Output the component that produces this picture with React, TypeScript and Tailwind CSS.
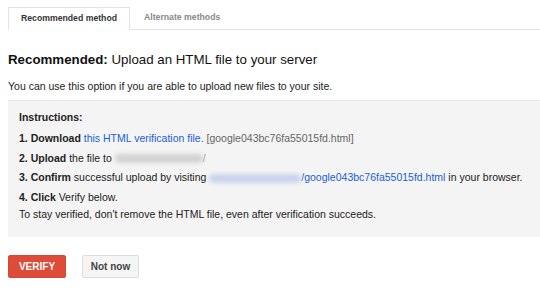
import React from 'react';

const blurBar = 'inline-block align-middle h-[9px] rounded-full blur-[2px]';

export default function App() {
  return (
    <div
      className="w-[540px] h-[293px] overflow-hidden bg-white pl-[8px] text-[#222]"
      style={{ fontFamily: '"Liberation Sans", Arial, sans-serif' }}
    >
      {/* Tabs */}
      <div className="mt-[8px] flex items-end h-[22px] border-b border-[#e3e3e3]">
        <div className="-mb-px h-[23px] w-[122px] flex items-center justify-center border border-b-0 border-[#e3e3e3] bg-white text-[8.7px] font-bold text-[#333]">
          Recommended method
        </div>
        <div className="h-[22px] flex items-center pl-[14px] text-[8.7px] font-bold text-[#888]">
          Alternate methods
        </div>
      </div>

      {/* Heading */}
      <h1 className="mt-[21px] text-[13.3px] leading-[18px] text-[#111]">
        <span className="font-bold">Recommended:</span> Upload an HTML file to your server
      </h1>

      <p className="mt-[10px] text-[10.5px] leading-[14px] text-[#222]">
        You can use this option if you are able to upload new files to your site.
      </p>

      {/* Instructions panel */}
      <div className="mt-[7px] h-[137px] bg-[#f4f4f4] border-t border-[#e6e6e6] pl-[11px] pt-[9px] text-[10.5px] leading-[14px] whitespace-nowrap">
        <div className="font-bold mb-[7px]">Instructions:</div>
        <div className="flex flex-col gap-[5.5px]">
          <div>
            <span className="font-bold">1. Download</span>{' '}
            <span className="text-[#1a5fd6]">this HTML verification file.</span>{' '}
            <span className="text-[#666]">[google043bc76fa55015fd.html]</span>
          </div>
          <div>
            <span className="font-bold">2. Upload</span> the file to{' '}
            <span className={`${blurBar} w-[88px] bg-[#d2d2d2]`} />
            <span className="text-[#999]">/</span>
          </div>
          <div>
            <span className="font-bold">3. Confirm</span> successful upload by visiting{' '}
            <span className={`${blurBar} w-[92px] bg-[#c9d3ee]`} />
            <span className="text-[#1a5fd6]">/google043bc76fa55015fd.html</span> in your browser.
          </div>
          <div>
            <span className="font-bold">4. Click</span> Verify below.
          </div>
          <div className="-mt-[2px]">To stay verified, don't remove the HTML file, even after verification succeeds.</div>
        </div>
      </div>

      {/* Buttons */}
      <div className="mt-[18px] flex gap-[16px]">
        <button className="h-[23px] w-[58px] rounded-[2px] bg-[#dd4b39] border border-[#d14836] text-white text-[10px] font-bold">
          VERIFY
        </button>
        <button className="h-[23px] w-[57px] rounded-[2px] bg-[#f5f5f5] border border-[#dcdcdc] text-[#444] text-[10px] font-bold">
          Not now
        </button>
      </div>
    </div>
  );
}
